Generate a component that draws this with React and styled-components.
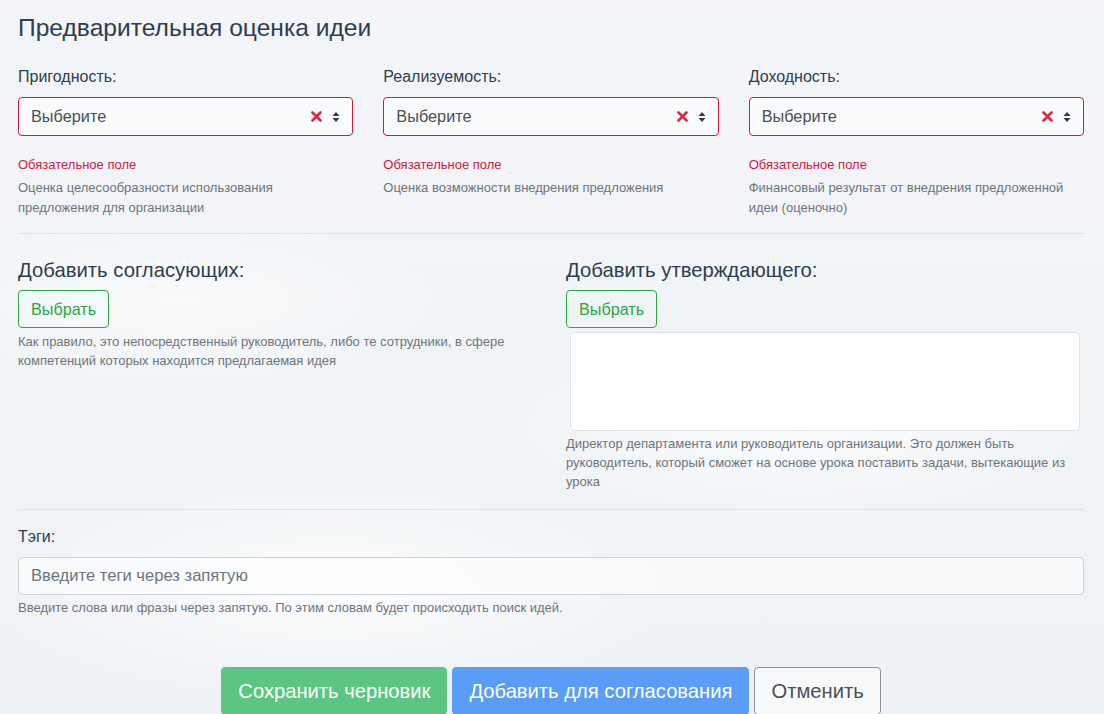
import React from 'react';
import styled, { createGlobalStyle } from 'styled-components';

const GlobalStyle = createGlobalStyle`
	html, body {
		margin: 0;
		padding: 0;
		overflow: hidden;
	}
	body {
		font-family: "Liberation Sans", Arial, sans-serif;
		color: #2c3e50;
	}
	* {
		box-sizing: border-box;
	}
`;

const Page = styled.div`
	min-height: 714px;
	padding: 13px 20px 0 18px;
	background:
		radial-gradient(ellipse 500px 160px at 330px 590px, rgba(255, 255, 255, 0.8), rgba(255, 255, 255, 0) 70%),
		radial-gradient(ellipse 420px 140px at 800px 430px, rgba(255, 255, 255, 0.7), rgba(255, 255, 255, 0) 70%),
		radial-gradient(ellipse 380px 120px at 180px 300px, rgba(255, 255, 255, 0.6), rgba(255, 255, 255, 0) 70%),
		linear-gradient(180deg, #f3f5f8 0%, #f1f4f7 60%, #eef2f5 100%);
`;

const Title = styled.h1`
	margin: 0;
	font-size: 24.6px;
	line-height: 29px;
	font-weight: 400;
	color: #2c3e50;
`;

const Grid = styled.div`
	display: grid;
	grid-template-columns: repeat(${(p) => p.cols}, 1fr);
	column-gap: 30px;
	margin-top: ${(p) => p.top || 0}px;
`;

const Field = styled.div`
	display: flex;
	flex-direction: column;
	margin-top: ${(p) => p.top || 0}px;
`;

const Label = styled.label`
	font-size: 16px;
	line-height: 20px;
	color: #2c3e50;
	margin-bottom: 10px;
`;

const Select = styled.div`
	display: flex;
	align-items: center;
	height: 39px;
	padding: 0 12px;
	border: 1px solid #d01a3f;
	border-radius: 4px;
	background: rgba(255, 255, 255, 0.55);
	font-size: 16.3px;
	color: #495057;
`;

const SelectValue = styled.span`
	flex: 1;
`;

const SelectIcons = styled.span`
	display: flex;
	align-items: center;
	gap: 10px;
`;

const ErrorText = styled.div`
	margin-top: 19px;
	font-size: 13px;
	line-height: 20px;
	color: #d3173d;
`;

const Hint = styled.div`
	margin-top: ${(p) => p.top || 3}px;
	font-size: 13px;
	line-height: ${(p) => p.lh || 19}px;
	color: #6c757d;
`;

const Divider = styled.hr`
	margin: ${(p) => p.top}px 0 0;
	border: 0;
	border-top: 1px solid #dde2e6;
`;

const SectionTitle = styled.h2`
	margin: 0 0 8px;
	font-size: 20.3px;
	line-height: 24px;
	font-weight: 400;
	color: #2c3e50;
`;

const OutlineButton = styled.button`
	align-self: flex-start;
	height: 38px;
	padding: 0 12px;
	border: 1px solid #28a745;
	border-radius: 4px;
	background: transparent;
	font-family: inherit;
	font-size: 16.2px;
	color: #28a745;
`;

const PickedBox = styled.div`
	height: 99px;
	margin: 4px 4px 0;
	border: 1px solid #dfe3e7;
	border-radius: 4px;
	background: #ffffff;
`;

const TagsInput = styled.input`
	width: 100%;
	height: 38px;
	padding: 0 12px;
	border: 1px solid #ced4da;
	border-radius: 4px;
	background: rgba(255, 255, 255, 0.6);
	font-family: inherit;
	font-size: 16.6px;
	color: #495057;
	&::placeholder {
		color: #6c757d;
	}
`;

const Actions = styled.div`
	display: flex;
	justify-content: center;
	gap: 5px;
	margin-top: 50px;
`;

const ActionButton = styled.button`
	height: 48px;
	padding: 0 16px;
	border: 1px solid ${(p) => p.border};
	border-radius: 4px;
	background: ${(p) => p.bg};
	font-family: inherit;
	font-size: 20.2px;
	color: ${(p) => p.color};
`;

function ClearIcon() {
	return (
		<svg width="11" height="11" viewBox="0 0 11 11">
			<path d="M1.5 1.5L9.5 9.5M9.5 1.5L1.5 9.5" stroke="#dc2840" strokeWidth="2.6" strokeLinecap="round" />
		</svg>
	);
}

function SortIcon() {
	return (
		<svg width="8" height="12" viewBox="0 0 8 12">
			<path d="M4 1L7.5 5H0.5Z" fill="#343a40" />
			<path d="M4 11L0.5 7H7.5Z" fill="#343a40" />
		</svg>
	);
}

const ratings = [
	{
		label: 'Пригодность:',
		hint: 'Оценка целесообразности использования предложения для организации',
	},
	{
		label: 'Реализуемость:',
		hint: 'Оценка возможности внедрения предложения',
	},
	{
		label: 'Доходность:',
		hint: 'Финансовый результат от внедрения предложенной идеи (оценочно)',
	},
];

export default function App() {
	return (
		<>
			<GlobalStyle />
			<Page>
				<Title>Предварительная оценка идеи</Title>

				<Grid cols={3} top={25}>
					{ratings.map((r) => (
						<Field key={r.label}>
							<Label>{r.label}</Label>
							<Select>
								<SelectValue>Выберите</SelectValue>
								<SelectIcons>
									<ClearIcon />
									<SortIcon />
								</SelectIcons>
							</Select>
							<ErrorText>Обязательное поле</ErrorText>
							<Hint lh={20}>{r.hint}</Hint>
						</Field>
					))}
				</Grid>

				<Divider top={15} />

				<Grid cols={2} top={24}>
					<Field>
						<SectionTitle>Добавить согласующих:</SectionTitle>
						<OutlineButton>Выбрать</OutlineButton>
						<Hint top={4}>
							Как правило, это непосредственный руководитель, либо те сотрудники, в сфере
							компетенций которых находится предлагаемая идея
						</Hint>
					</Field>
					<Field>
						<SectionTitle>Добавить утверждающего:</SectionTitle>
						<OutlineButton>Выбрать</OutlineButton>
						<PickedBox />
						<Hint top={3}>
							Директор департамента или руководитель организации. Это должен быть
							руководитель, который сможет на основе урока поставить задачи, вытекающие из
							урока
						</Hint>
					</Field>
				</Grid>

				<Divider top={18} />

				<Field top={17}>
					<Label>Тэги:</Label>
					<TagsInput placeholder="Введите теги через запятую" />
					<Hint top={3}>
						Введите слова или фразы через запятую. По этим словам будет происходить поиск идей.
					</Hint>
				</Field>

				<Actions>
					<ActionButton bg="#5bc682" border="#5bc682" color="#ffffff">
						Сохранить черновик
					</ActionButton>
					<ActionButton bg="#5a9df7" border="#5a9df7" color="#ffffff">
						Добавить для согласования
					</ActionButton>
					<ActionButton bg="rgba(255,255,255,0.5)" border="#8a9197" color="#495057">
						Отменить
					</ActionButton>
				</Actions>
			</Page>
		</>
	);
}
